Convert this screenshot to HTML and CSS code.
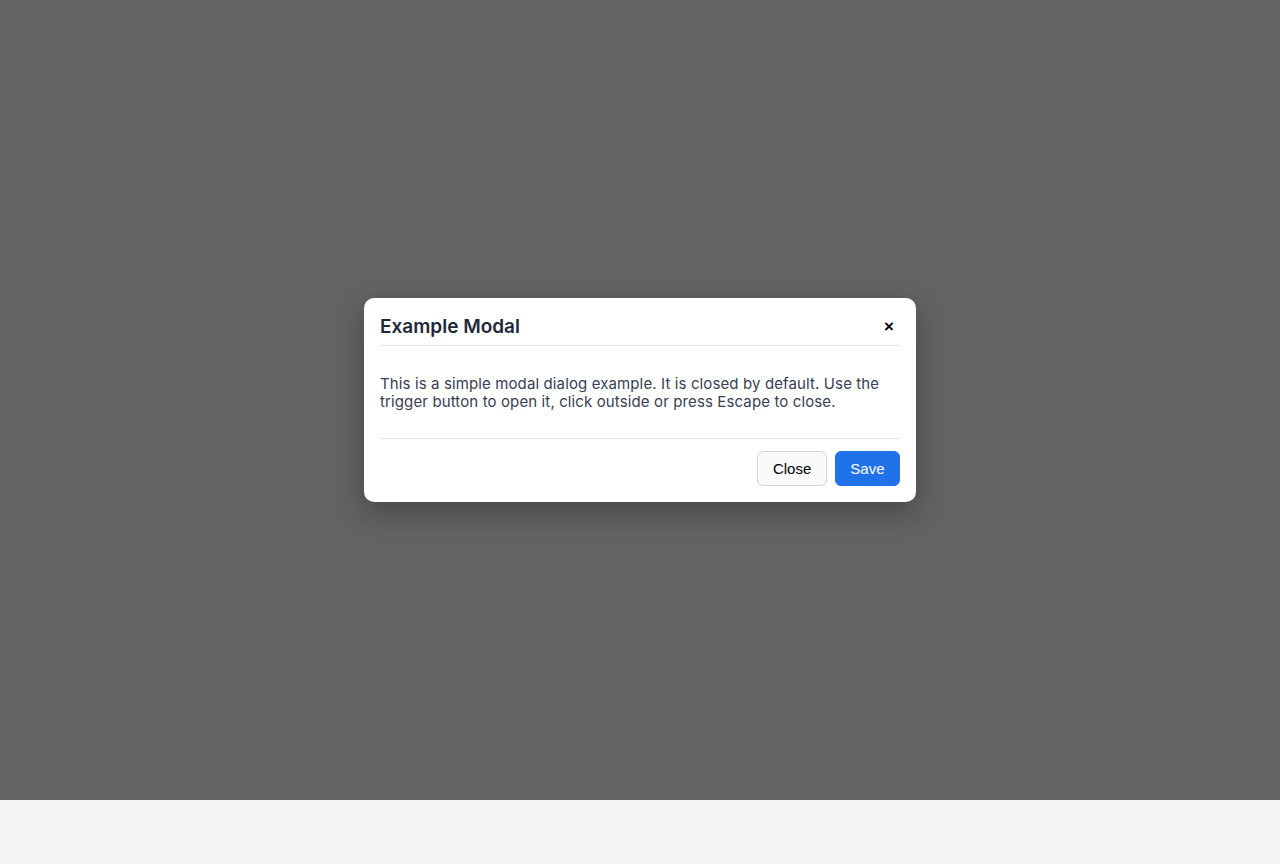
FILE: index.html
```html
<!DOCTYPE html>
<html lang="en">
<head>
<meta charset="utf-8">
<title>Example Modal</title>
<link rel="stylesheet" href="styles.css">
</head>
<body>
<div class="overlay">
  <div class="modal" role="dialog" aria-labelledby="modal-title">
    <div class="modal-header">
      <h2 class="modal-title" id="modal-title">Example Modal</h2>
      <button class="modal-x" aria-label="Close">×</button>
    </div>
    <div class="modal-body">
      <p>This is a simple modal dialog example. It is closed by default. Use the trigger button to open it, click outside or press Escape to close.</p>
    </div>
    <div class="modal-footer">
      <button class="btn btn-secondary">Close</button>
      <button class="btn btn-primary">Save</button>
    </div>
  </div>
</div>
</body>
</html>
```
FILE: styles.css
```css
html, body {
  margin: 0;
  padding: 0;
}
body {
  background: #f3f4f6;
  font-family: Inter, "Noto Sans", sans-serif;
  height: 864px;
}
.overlay {
  position: fixed;
  left: 0;
  top: 0;
  width: 100%;
  height: 800px;
  background: rgb(99, 99, 99);
  display: flex;
  align-items: center;
  justify-content: center;
}
.modal {
  width: 520px;
  padding: 16px;
  background: #ffffff;
  border-radius: 10px;
  box-shadow: 0 10px 30px rgba(0, 0, 0, 0.3);
}
.modal-header {
  display: flex;
  align-items: center;
  justify-content: space-between;
  padding-bottom: 6px;
  padding-top: 1px;
  border-bottom: 1px solid #e5e7eb;
}
.modal-title {
  margin: 0;
  font-size: 19px;
  line-height: 24px;
  font-weight: 600;
  color: #1f2937;
}
.modal-x {
  border: none;
  background: none;
  padding: 0 6px 0 4px;
  font-family: "Liberation Sans", Arial, sans-serif;
  font-size: 17px;
  font-weight: 700;
  line-height: 24px;
  color: #000;
  cursor: pointer;
}
.modal-body {
  padding: 29px 0 27px;
}
.modal-body p {
  margin: 0;
  font-size: 15px;
  letter-spacing: 0.12px;
  line-height: 18px;
  color: #374151;
}
.modal-footer {
  display: flex;
  justify-content: flex-end;
  gap: 8px;
  padding-top: 12px;
  border-top: 1px solid #e5e7eb;
}
.btn {
  font-family: "Liberation Sans", Arial, sans-serif;
  font-size: 15px;
  line-height: 17px;
  padding: 8px 14.5px;
  border-radius: 6px;
  border: 1px solid transparent;
  cursor: pointer;
}
.btn-secondary {
  background: #f9fafb;
  border-color: #d1d5db;
  color: #000;
}
.btn-primary {
  background: #1f72e8;
  border-color: #1f72e8;
  color: #fff;
}
```
